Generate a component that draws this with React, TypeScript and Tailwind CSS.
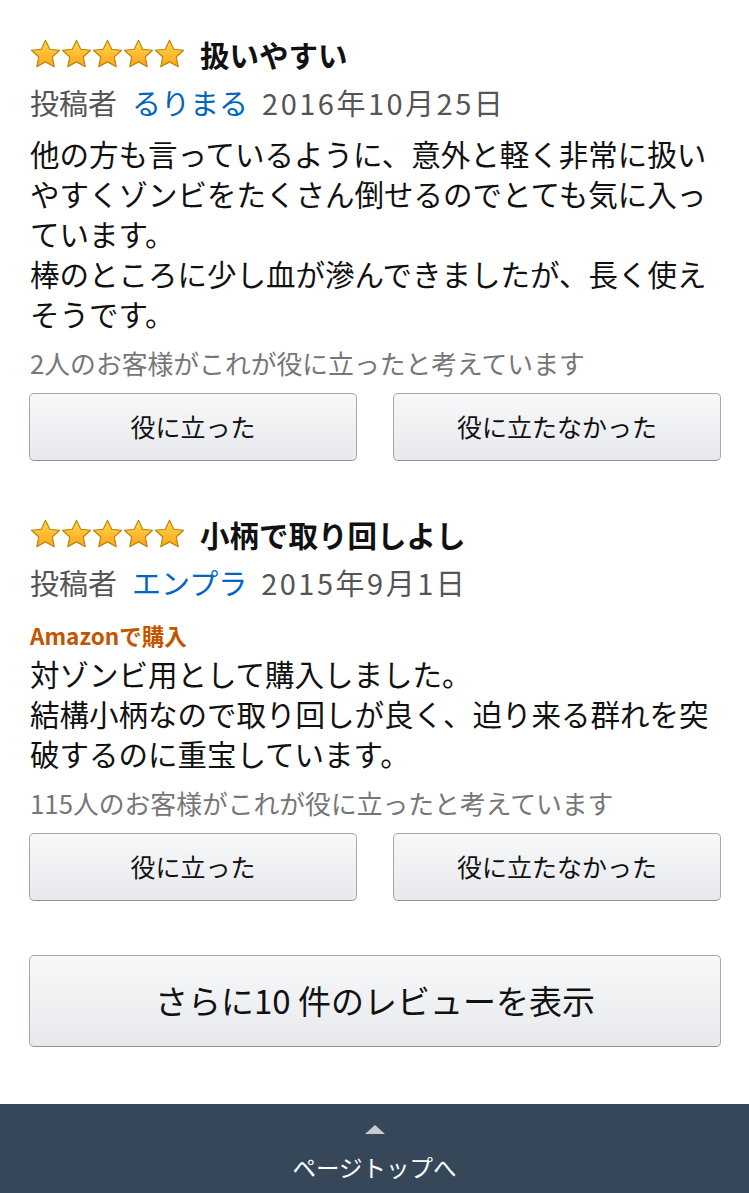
import React from 'react';

const font = "font-['Noto_Sans_CJK_JP','Noto_Sans',sans-serif]";

const Star: React.FC<{ id: string }> = ({ id }) => (
  <svg width="31" height="30" viewBox="0 0 24 23">
    <defs>
      <linearGradient id={id} x1="0" y1="0" x2="0" y2="1">
        <stop offset="0" stopColor="#ffd84a" />
        <stop offset="1" stopColor="#ffa41c" />
      </linearGradient>
    </defs>
    <path
      d="M12 0.8l3.3 7 7.6.8-5.7 5.2 1.6 7.6L12 17.6l-6.8 3.8 1.6-7.6L1.1 8.6l7.6-.8z"
      fill={`url(#${id})`}
      stroke="#b9850a"
      strokeWidth="0.9"
      strokeLinejoin="round"
    />
  </svg>
);

const Stars: React.FC<{ k: string }> = ({ k }) => (
  <div className="flex">
    {[0, 1, 2, 3, 4].map((i) => (
      <Star key={i} id={`g-${k}-${i}`} />
    ))}
  </div>
);

const Btn: React.FC<{ label: string; className?: string }> = ({ label, className }) => (
  <button
    className={`flex items-center justify-center rounded-[5px] border border-[#a4a8ae] border-b-[#8d9096] bg-gradient-to-b from-[#f7f8fa] to-[#e7e9ec] text-[#111] ${className ?? ''}`}
  >
    {label}
  </button>
);

type Review = {
  title: string;
  author: string;
  date: string;
  verified?: boolean;
  body: string[];
  helpful: string;
};

const reviews: Review[] = [
  {
    title: '扱いやすい',
    author: 'るりまる',
    date: '2016年10月25日',
    body: [
      '他の方も言っているように、意外と軽く非常に扱いやすくゾンビをたくさん倒せるのでとても気に入っています。',
      '棒のところに少し血が滲んできましたが、長く使えそうです。',
    ],
    helpful: '2人のお客様がこれが役に立ったと考えています',
  },
  {
    title: '小柄で取り回しよし',
    author: 'エンプラ',
    date: '2015年9月1日',
    verified: true,
    body: [
      '対ゾンビ用として購入しました。',
      '結構小柄なので取り回しが良く、迫り来る群れを突破するのに重宝しています。',
    ],
    helpful: '115人のお客様がこれが役に立ったと考えています',
  },
];

export default function App() {
  return (
    <div className={`w-[749px] h-[1193px] bg-white overflow-hidden flex flex-col ${font}`}>
      <div className="pl-[29px] pr-[28px] pt-[36px]">
        {reviews.map((r, idx) => (
          <div key={idx} className={idx > 0 ? 'mt-[55px]' : ''}>
            <div className="flex items-center h-[36px] pl-[1px]">
              <Stars k={`r${idx}`} />
              <span className="ml-[15px] text-[29.5px] font-bold text-[#111] leading-[36px]">{r.title}</span>
            </div>
            <div className="mt-[10px] pl-[1px] flex text-[29px] leading-[40px] text-[#555] whitespace-nowrap">
              <span>投稿者</span>
              <span className="ml-[15px] text-[#0066c0]">{r.author}</span>
              <span className="ml-[14px] tracking-[2.5px]">{r.date}</span>
            </div>
            {r.verified && (
              <div className="mt-[19px] pl-[1px] text-[22.5px] leading-[28px] font-bold text-[#c45500]">
                Amazonで購入
              </div>
            )}
            <div className={`${r.verified ? 'mt-[4px]' : 'mt-[11px]'} pl-[1px] w-[692px] text-[29.5px] leading-[40px] text-[#111]`}>
              {r.body.map((p, i) => (
                <p key={i}>{p}</p>
              ))}
            </div>
            <div className="mt-[15px] pl-[1px] text-[25.8px] leading-[30px] text-[#767676] whitespace-nowrap">
              {r.helpful}
            </div>
            <div className="mt-[15px] flex justify-between">
              <Btn label="役に立った" className="w-[328px] h-[68px] text-[25px]" />
              <Btn label="役に立たなかった" className="w-[328px] h-[68px] text-[25px]" />
            </div>
          </div>
        ))}
        <Btn label="さらに10 件のレビューを表示" className="mt-[54px] w-full h-[92px] text-[33px]" />
      </div>
      <div className="mt-[57px] flex-1 bg-[#37475a] flex flex-col items-center">
        <div className="mt-[21px] w-0 h-0 border-l-[10px] border-r-[10px] border-b-[9px] border-l-transparent border-r-transparent border-b-[#c8cbcf]" />
        <div className="mt-[16px] text-[23.5px] leading-[34px] text-white">ページトップへ</div>
      </div>
    </div>
  );
}
